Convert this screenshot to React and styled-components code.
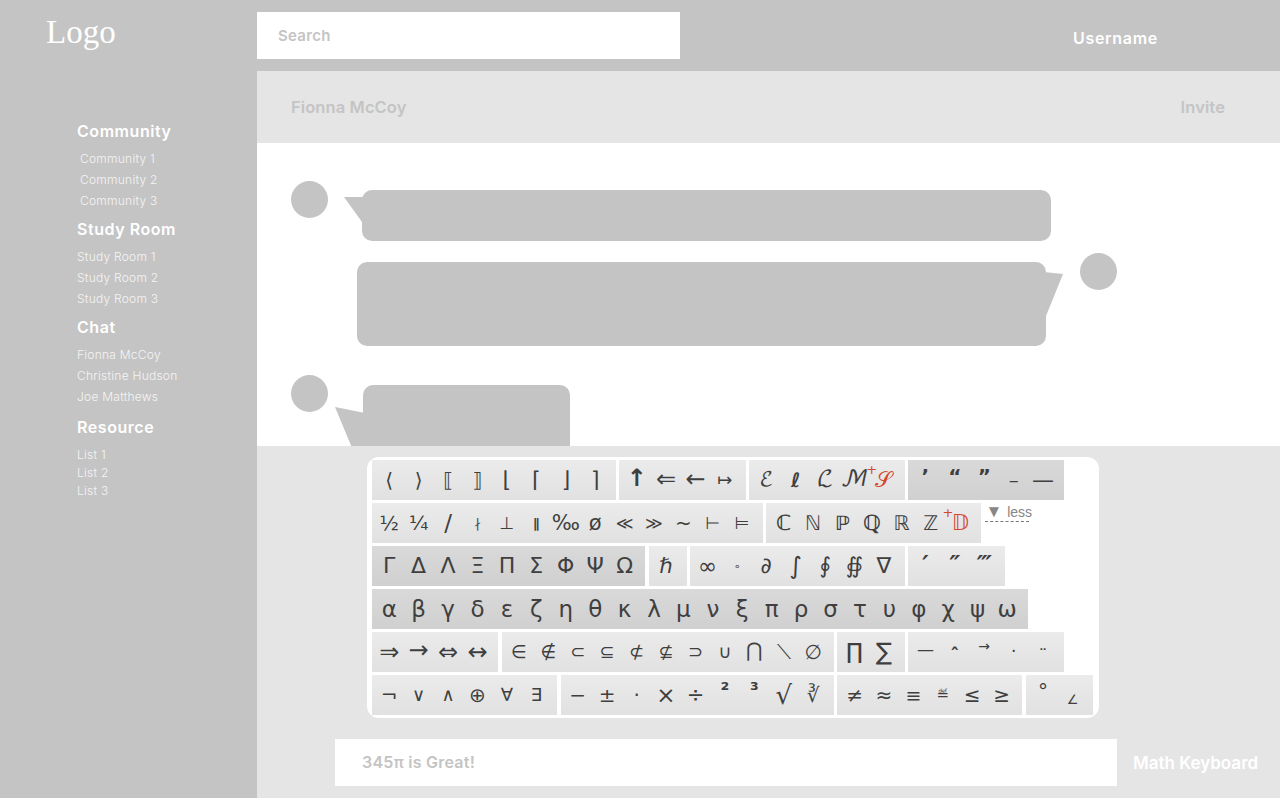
import React from "react";
import styled, { createGlobalStyle } from "styled-components";

const Global = createGlobalStyle`
  html, body { margin: 0; padding: 0; background: #fff; }
  * { box-sizing: border-box; }
  body { font-family: Inter, "Open Sans", sans-serif; }
`;
const Page = styled.div`
  display: grid; grid-template-columns: 257px 1fr; width: 1280px; height: 798px;
  overflow: hidden; background: #c4c4c4;
`;
const Sidebar = styled.aside`display: flex; flex-direction: column; background: #c4c4c4; color: #fff;`;
const Logo = styled.div`
  font-family: "Liberation Serif", serif; font-size: 33px; line-height: 38px;
  padding: 13px 0 0 46px; height: 119px; color: #fff;
`;
const Section = styled.nav`display: flex; flex-direction: column; padding-left: 77px;`;
const Heading = styled.div`
  font-size: 16px; font-weight: 600; line-height: 24px; letter-spacing: .55px; color: #fff; margin-bottom: 4.5px;
`;
const NavItem = styled.div`
  font-size: 12px; font-weight: 300; line-height: 21px; height: ${p => p.$h ?? 21}px; color: #f4f4f4;
  letter-spacing: .25px; padding-left: ${p => p.$in ?? 0}px; white-space: nowrap;
`;
const Group = styled.div`margin-bottom: ${p => p.$mb ?? 6.5}px; display: flex; flex-direction: column;`;
const Main = styled.main`display: flex; flex-direction: column; min-width: 0; height: 798px;`;
const Topbar = styled.header`
  height: 71px; display: flex; align-items: flex-start; padding-top: 12px; background: #c4c4c4; flex: none;
`;
const SearchBox = styled.div`
  width: 423px; height: 47px; background: #fff; display: flex; align-items: center; padding-left: 21px;
  font-size: 15px; font-weight: 600; color: #c4c4c4; letter-spacing: .3px;
`;
const Username = styled.div`
  margin-left: 393px; margin-top: 14px; color: #fff; font-size: 16px; font-weight: 600; line-height: 24px; letter-spacing: .7px;
`;
const ChatHead = styled.div`
  height: 72px; flex: none; background: #e5e5e5; display: flex; justify-content: space-between; align-items: center;
  padding: 0 55px 0 34px; color: #c4c4c4; font-size: 16.5px; font-weight: 600; letter-spacing: .1px;
`;
const Chat = styled.section`
  height: 303px; flex: none; background: #fff; overflow: hidden; padding-top: 38px; display: flex; flex-direction: column;
`;
const Row = styled.div`display: flex; align-items: flex-start; margin: ${p => p.$m};`;
const Avatar = styled.div`
  width: 37px; height: 37px; border-radius: 50%; background: #c4c4c4; flex: none; margin-left: ${p => p.$ml ?? 0}px;
`;
const Bubble = styled.div`
  position: relative; flex: none; background: #c4c4c4; border-radius: 10px;
  width: ${p => p.$w}px; height: ${p => p.$h}px; margin: ${p => p.$m};
`;
const Tail = styled.svg`position: absolute; display: block; left: ${p => p.$x}px; top: ${p => p.$y}px; overflow: visible;`;
const Dock = styled.section`
  flex: 1; background: #e5e5e5; display: flex; flex-direction: column; align-items: flex-start; padding: 11px 0 0 110px;
`;
const Keyboard = styled.div`
  width: 732px; height: 261px; background: #fff; border-radius: 12px; padding: 3px 5px; display: flex; flex-direction: column; gap: 3px;
`;
const KeyRow = styled.div`display: flex; gap: 3.5px; height: 40px; align-items: stretch;`;
const KeyGroup = styled.div`
  display: flex; padding: 0 6px 0 2.5px; align-items: center;
  background: ${p => p.$dark ? "linear-gradient(#d9d9d9,#d0d0d0)" : "linear-gradient(#ebebeb,#e1e1e1)"};
`;
const Key = styled.span`
  position: relative; width: 29.43px; height: 40px; display: flex; align-items: center; justify-content: center; flex: none;
  font-family: ${p => p.$math ? '"DejaVu Math TeX Gyre", "Noto Sans Math", "DejaVu Sans", serif' : '"DejaVu Sans", sans-serif'};
  font-size: ${p => p.$s ?? 20}px; line-height: 1; font-weight: ${p => p.$b ? 700 : 400};
  font-style: ${p => p.$i ? "italic" : "normal"}; color: ${p => p.$red ? "#d4472f" : "#3f3f3f"};
  padding-bottom: ${p => (p.$lift ?? 0) * 2}px; padding-top: ${p => (p.$drop ?? 0) * 2}px;
`;
const Plus = styled.i`
  position: absolute; left: -3px; top: 3px; font-style: normal; font-family: "DejaVu Sans", sans-serif; font-size: 13px; line-height: 1; color: #d4472f;
`;
const Less = styled.div`
  align-self: flex-start; margin-top: 1px; margin-left: 1px; height: 18px; border-bottom: 1px dashed #777; width: 44px;
  font-family: "Liberation Sans", sans-serif; font-size: 14px; line-height: 15px; color: #868686; white-space: nowrap;
`;
const Triangle = styled.span`font-size: 17px; margin-right: 1px;`;
const InputRow = styled.div`display: flex; align-items: center; margin: 21px 0 0 -32px;`;
const MathInput = styled.div`
  width: 782px; height: 47px; background: #fff; display: flex; align-items: center; padding: 0 0 2px 27px;
  color: #c4c4c4; font-size: 16px; font-weight: 600; letter-spacing: .25px;
`;
const MathLabel = styled.div`margin-left: 16px; color: #fff; font-size: 17px; font-weight: 600; white-space: nowrap;`;

const g = (c, s, lift, extra) => ({ c, s, lift, ...extra });
const rows = [
  { groups: [
    { keys: [g("⟨",20),g("⟩",20),g("⟦",20),g("⟧",20),g("⌊",22),g("⌈",22),g("⌋",22),g("⌉",22)] },
    { keys: [g("↑",24,2,{b:1}),g("⇐",24,1),g("←",24,1),g("↦",18)] },
    { keys: [g("ℰ",20,0,{math:1}),g("ℓ",20,0,{b:1}),g("ℒ",22,0,{math:1}),g("ℳ",22,0,{math:1}),g("𝒮",22,0,{red:true,plus:true})] },
    { dark: true, keys: [g("’",20,4,{b:1}),g("“",20,4,{b:1}),g("”",20,4,{b:1}),g("–",20,0),g("—",22,0)] },
  ]},
  { groups: [
    { keys: [g("½",20),g("¼",20),g("/",23),g("∤",13),g("⊥",17),g("∥",13,0,{b:1}),g("‰",21),g("ø",21),g("≪",17),g("≫",17),g("~",20),g("⊢",17),g("⊨",17)] },
    { keys: [g("ℂ",21,0,{b:1}),g("ℕ",20),g("ℙ",20,0,{b:1}),g("ℚ",21,0,{b:1}),g("ℝ",20),g("ℤ",20),g("𝔻",21,0,{red:true,plus:true})] },
  ], less: true },
  { groups: [
    { dark: true, keys: ["Γ","Δ","Λ","Ξ","Π","Σ","Φ","Ψ","Ω"].map(c => g(c,22)) },
    { keys: [g("ℏ",21)] },
    { keys: [g("∞",23),g("∘",11,0),g("∂",22),g("∫",24),g("∮",22),g("∯",22),g("∇",22)] },
    { keys: [g("′",24,1,{b:1,i:1}),g("″",24,1,{b:1,i:1}),g("‴",24,1,{b:1,i:1})] },
  ]},
  { groups: [
    { dark: true, keys: "αβγδεζηθκλμνξπρστυφχψω".split("").map(c => g(c,23)) },
  ]},
  { groups: [
    { keys: [g("⇒",24),g("→",24,2),g("⇔",24),g("↔",24)] },
    { keys: [g("∈",18),g("∉",18),g("⊂",18),g("⊆",18),g("⊄",18),g("⊈",18),g("⊃",18),g("∪",18),g("⋂",20,2),g("⟍",20),g("∅",20)] },
    { keys: [g("∏",22),g("∑",24)] },
    { keys: [g("—",17,3),g("ˆ",18,0,{drop:3,b:1}),g("→",14,6),g("·",17,1),g("¨",17,0,{drop:4})] },
  ]},
  { groups: [
    { keys: [g("¬",20),g("∨",18),g("∧",18),g("⊕",20),g("∀",18),g("∃",18)] },
    { keys: [g("−",20),g("±",20),g("·",20),g("×",23),g("÷",21),g("²",20,5,{b:1}),g("³",20,5,{b:1}),g("√",26),g("∛",20)] },
    { keys: [g("≠",20),g("≈",20),g("≡",19),g("≝",15),g("≤",20),g("≥",20)] },
    { keys: [g("°",20,4),g("∠",13,0,{drop:4})] },
  ]},
];

const nav = [
  { title: "Community", items: ["Community 1","Community 2","Community 3"], indent: 3 },
  { title: "Study Room", items: ["Study Room 1","Study Room 2","Study Room 3"] },
  { title: "Chat", items: ["Fionna McCoy","Christine Hudson","Joe Matthews"], mb: 8.5 },
  { title: "Resource", items: ["List 1","List 2","List 3"], h: 18 },
];

export default function App() {
  return (
    <Page>
      <Global />
      <Sidebar>
        <Logo>Logo</Logo>
        <Section>
          {nav.map(s => (
            <Group key={s.title} $mb={s.mb}>
              <Heading>{s.title}</Heading>
              {s.items.map(i => <NavItem key={i} $in={s.indent} $h={s.h}>{i}</NavItem>)}
            </Group>
          ))}
        </Section>
      </Sidebar>
      <Main>
        <Topbar>
          <SearchBox>Search</SearchBox>
          <Username>Username</Username>
        </Topbar>
        <ChatHead><span>Fionna McCoy</span><span>Invite</span></ChatHead>
        <Chat>
          <Row $m="0 0 0 34px">
            <Avatar />
            <Bubble $w={689} $h={51} $m="9px 0 0 34px">
              <Tail $x={-18} $y={7} width="20" height="26"><polygon points="0,0 20,0 20,10 18,25" fill="#c4c4c4" /></Tail>
            </Bubble>
          </Row>
          <Row $m="12px 0 0 100px">
            <Bubble $w={689} $h={84} $m="9px 0 0 0">
              <Tail $x={687} $y={10} width="20" height="44"><polygon points="0,0 19,2 2,44 0,44" fill="#c4c4c4" /></Tail>
            </Bubble>
            <Avatar $ml={34} />
          </Row>
          <Row $m="29px 0 0 34px">
            <Avatar />
            <Bubble $w={207} $h={90} $m="10px 0 0 35px">
              <Tail $x={-28} $y={22} width="30" height="60"><polygon points="0,0 30,6 30,60 25,60" fill="#c4c4c4" /></Tail>
            </Bubble>
          </Row>
        </Chat>
        <Dock>
          <Keyboard>
            {rows.map((r, i) => (
              <KeyRow key={i}>
                {r.groups.map((gr, j) => (
                  <KeyGroup key={j} $dark={gr.dark}>
                    {gr.keys.map((k, n) => (
                      <Key key={n} $s={k.s} $lift={k.lift} $drop={k.drop} $red={k.red} $b={k.b} $i={k.i} $math={k.math}>
                        {k.plus && <Plus>+</Plus>}{k.c}
                      </Key>
                    ))}
                  </KeyGroup>
                ))}
                {r.less && <Less><Triangle>▼</Triangle> less</Less>}
              </KeyRow>
            ))}
          </Keyboard>
          <InputRow>
            <MathInput>345π is Great!</MathInput>
            <MathLabel>Math Keyboard</MathLabel>
          </InputRow>
        </Dock>
      </Main>
    </Page>
  );
}
